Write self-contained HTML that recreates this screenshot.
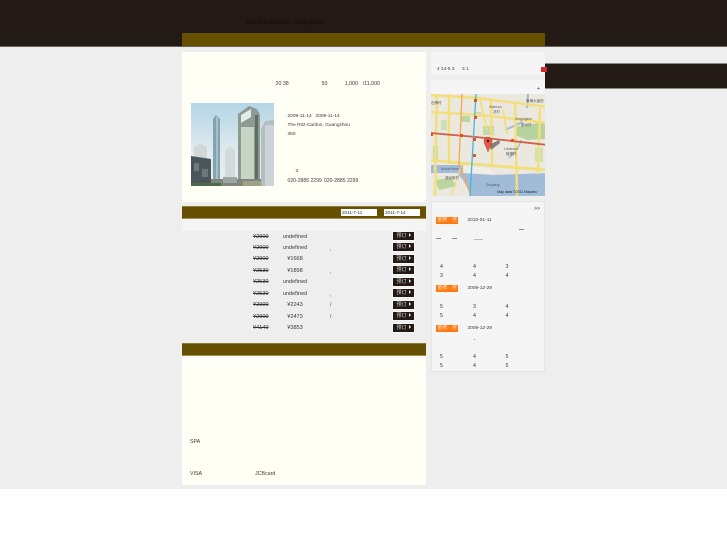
<!DOCTYPE html>
<html>
<head>
<meta charset="utf-8">
<style>
html,body{margin:0;padding:0;background:#fff;}
#p{position:relative;width:727px;height:545px;overflow:hidden;background:#fff;font-family:"Liberation Sans","Noto Sans CJK SC",sans-serif;font-size:5.3px;color:#3a3a3a;filter:blur(.25px);}
.b{position:absolute;}
.t{position:absolute;white-space:nowrap;line-height:8px;height:8px;margin-top:.6px;}
.n{font-size:4.8px;}
.r{font-size:5.6px;}
.c{transform:translateX(-50%);}
.s{text-decoration:line-through;color:#333;}
.btn{position:absolute;left:393px;width:21px;height:8px;background:#231a15;color:#ddd;font-size:5px;line-height:8px;text-align:center;outline:1px solid #f7f7f7;white-space:nowrap;}
.btn i{display:inline-block;width:0;height:0;border-left:2.5px solid #eee;border-top:2px solid transparent;border-bottom:2px solid transparent;margin-left:2px;}
.tag{position:absolute;left:436px;width:22px;height:7px;background:#ff7a0f;color:#ffe9d0;font-size:5px;line-height:7px;text-align:center;white-space:nowrap;}
.bar{position:absolute;background:#665000;border-top:1px solid #8d7b3a;border-bottom:1px solid #a08f55;box-sizing:border-box;}
.in{position:absolute;top:209px;width:36px;height:7px;background:#fff;color:#333;font-size:4.6px;line-height:7px;padding-left:1px;box-sizing:border-box;}
</style>
</head>
<body>
<div id="p">
<div class="b" style="left:0;top:0;width:727px;height:489px;background:#eeeeee;"></div>
<div class="b" style="left:0;top:0;width:727px;height:47px;background:#231a15;border-bottom:1px solid #6b655e;box-sizing:border-box;"></div>
<div class="b" style="left:182px;top:33px;width:363px;height:13px;background:#665000;"></div>
<div class="t" style="left:245px;top:18px;font-size:6.2px;color:#0f0b08;">The Ritz-Carlton, Guangzhou</div>

<div class="b" style="left:545px;top:63px;width:182px;height:26px;background:#231a15;border-top:1px solid #8a857f;border-bottom:1px solid #8a857f;box-sizing:border-box;"></div>

<div class="b" style="left:182px;top:52px;width:244px;height:150px;background:#fffff5;"></div>
<div class="t" style="left:275.500px;top:79px;">20 38</div>
<div class="t" style="left:321.500px;top:79px;">50</div>
<div class="t" style="left:344.700px;top:79px;">1,000</div>
<div class="t" style="left:362.700px;top:79px;">/11,000</div>

<svg class="b" style="left:191px;top:103px;" width="83" height="83" viewBox="0 0 83 83">
<defs><linearGradient id="sky" x1="0" y1="0" x2="0" y2="1"><stop offset="0" stop-color="#b4d5e6"/><stop offset=".6" stop-color="#e2ebee"/><stop offset="1" stop-color="#e8ecec"/></linearGradient></defs>
<rect width="83" height="83" fill="url(#sky)"/>
<polygon points="3,44 9,41 16,44 16,56 3,56" fill="#d2d6d6"/>
<polygon points="22,78 22,16 25,12 29,16 29,78" fill="#84a3b0"/>
<rect x="25" y="14" width="2" height="64" fill="#a8c0c9"/>
<polygon points="34,76 34,47 39,43 44,47 44,76" fill="#d4d9d9"/>
<polygon points="47,78 47,11 58,3 66,6 69,12 69,78" fill="#8b9a93"/>
<rect x="50" y="24" width="13" height="54" fill="#c6d6c4"/>
<rect x="64" y="12" width="3" height="66" fill="#616c67"/>
<polygon points="50,12 60,6 60,14 50,20" fill="#e3eaec"/>
<polygon points="70,26 74,18 83,17 83,83 70,83" fill="#b4bec2"/>
<rect x="74" y="22" width="9" height="61" fill="#ccd3d6"/>
<polygon points="0,53 20,56 20,83 0,83" fill="#4a565b"/>
<rect x="3" y="60" width="5" height="8" fill="#6c7a7f"/>
<rect x="11" y="66" width="6" height="8" fill="#6b777b"/>
<rect x="20" y="76" width="50" height="7" fill="#80867b"/>
<rect x="32" y="74" width="14" height="6" fill="#9aa5a5"/>
<rect x="52" y="78" width="18" height="5" fill="#a0a186"/>
<rect x="0" y="80" width="30" height="3" fill="#4d6b49"/>
</svg>

<div class="t n" style="left:287.5px;top:112px;">2009-11-14</div>
<div class="t n" style="left:315.500px;top:112px;">2009-11-14</div>
<div class="t n" style="left:287.5px;top:121px;">The Ritz-Carlton, Guangzhou</div>
<div class="t n" style="left:287.5px;top:130px;">350</div>
<div class="t n" style="left:295.500px;top:167px;">3</div>
<div class="t" style="left:287.5px;top:176.500px;font-size:5.1px;">020-2885 2299</div>
<div class="t" style="left:324px;top:176.500px;font-size:5.1px;">020-2885 2299</div>

<div class="bar" style="left:182px;top:206px;width:244px;height:13px;"></div>
<div class="in" style="left:341px;">2011-7-11</div>
<div class="in" style="left:384px;">2011-7-14</div>
<div class="b" style="left:182px;top:219px;width:244px;height:12px;background:#f5f5f5;"></div>

<div class="t r s" style="left:253px;top:232px;">¥2900</div><div class="t r c" style="left:295px;top:232px;">undefined</div><div class="btn" style="top:232px;">预订<i></i></div>
<div class="t r s" style="left:253px;top:243px;">¥2900</div><div class="t r c" style="left:295px;top:243px;">undefined</div><div class="t" style="left:330px;top:244px;">,</div><div class="btn" style="top:243px;">预订<i></i></div>
<div class="t r s" style="left:253px;top:254.500px;">¥2900</div><div class="t r c" style="left:295px;top:254.500px;">¥1668</div><div class="btn" style="top:255px;">预订<i></i></div>
<div class="t r s" style="left:253px;top:266px;">¥2530</div><div class="t r c" style="left:295px;top:266px;">¥1898</div><div class="t" style="left:330px;top:267px;">,</div><div class="btn" style="top:266px;">预订<i></i></div>
<div class="t r s" style="left:253px;top:277.500px;">¥2530</div><div class="t r c" style="left:295px;top:277.500px;">undefined</div><div class="btn" style="top:278px;">预订<i></i></div>
<div class="t r s" style="left:253px;top:289px;">¥2530</div><div class="t r c" style="left:295px;top:289px;">undefined</div><div class="t" style="left:330px;top:290px;">,</div><div class="btn" style="top:289px;">预订<i></i></div>
<div class="t r s" style="left:253px;top:300.500px;">¥2900</div><div class="t r c" style="left:295px;top:300.500px;">¥2243</div><div class="t" style="left:330px;top:300.500px;">/</div><div class="btn" style="top:301px;">预订<i></i></div>
<div class="t r s" style="left:253px;top:312px;">¥2900</div><div class="t r c" style="left:295px;top:312px;">¥2473</div><div class="t" style="left:330px;top:312px;">/</div><div class="btn" style="top:312px;">预订<i></i></div>
<div class="t r s" style="left:253px;top:323.500px;">¥4140</div><div class="t r c" style="left:295px;top:323.500px;">¥3853</div><div class="btn" style="top:324px;">预订<i></i></div>

<div class="bar" style="left:182px;top:343px;width:244px;height:13px;"></div>
<div class="b" style="left:182px;top:356px;width:244px;height:129px;background:#fffff5;"></div>
<div class="t" style="left:190px;top:437px;">SPA</div>
<div class="t" style="left:190px;top:469px;">VISA</div>
<div class="t" style="left:255px;top:469px;">JCBcard</div>

<div class="b" style="left:431px;top:52px;width:114px;height:23px;background:#f5f5f5;"></div>
<div class="t n" style="left:437px;top:65px;">4 14-5 3</div>
<div class="t n" style="left:462px;top:65px;">3 1</div>
<div class="b" style="left:541px;top:67px;width:6px;height:5px;background:#d8262a;"></div>

<div class="b" style="left:431px;top:80px;width:114px;height:116px;background:#f5f5f5;"></div>
<div class="t" style="left:537px;top:84px;">+</div>

<svg class="b" style="left:431px;top:94px;" width="114" height="102" viewBox="0 0 114 102">
<rect width="114" height="102" fill="#ebe8df"/>
<polygon points="84,33 114,28 114,45 96,46 84,41" fill="#b6d29d"/>
<rect x="30" y="22" width="9" height="6" fill="#bcd6a0"/>
<rect x="52" y="32" width="11" height="9" fill="#c4d9a8"/>
<rect x="2" y="52" width="5" height="14" fill="#c5dcaa"/>
<rect x="44" y="18" width="6" height="5" fill="#c8dcae"/>
<rect x="104" y="54" width="8" height="14" fill="#cfe0b5"/>
<rect x="10" y="26" width="6" height="10" fill="#cfe0b5"/>
<polygon points="-1,71 32,71 32,79 62,81 117,79 117,103 41,103 32,86 26,79 -1,79" fill="#a0bcd8"/>
<polygon points="33,72 58,74 62,80 33,79" fill="#efeee6"/>
<polygon points="4,86 20,84 26,92 8,96" fill="#bcd59f"/>
<path d="M97 0 L96 14 M74 36 L92 28" stroke="#a0bcd8" stroke-width="2" fill="none"/>
<path d="M90 46 C88 54 84 58 78 64" stroke="#a0bcd8" stroke-width="1.500" fill="none"/>
<g stroke="#f3df7a" fill="none" stroke-width="2.400">
<path d="M-1 1 L46 4 L117 13"/>
<path d="M-1 18 L50 21 L117 29"/>
<path d="M-1 66 L40 70 L117 76" stroke-width="2.800"/>
<path d="M6 0 L4 78"/>
<path d="M18 0 L18 70"/>
<path d="M60 6 L61 72"/>
<path d="M84 8 L86 102"/>
<path d="M109 14 L107 80"/>
<path d="M49 5 L56 36" stroke-width="1.800"/>
<path d="M72 15 L76 40" stroke-width="1.800"/>
<path d="M5 78 L4 102"/>
<path d="M31 70 L20 102" stroke-width="1.200"/>
</g>
<path d="M-1 39 L45 43 L117 51" stroke="#d0604e" stroke-width="1.800" fill="none"/>
<path d="M31 0 L28 69 L40 102" stroke="#f4a65a" stroke-width="1.300" fill="none"/>
<path d="M45 0 L39 102" stroke="#3fb8e0" stroke-width="1.300" fill="none"/>
<g fill="#e8501f">
<rect x="43" y="5" width="3" height="3"/><rect x="43" y="22" width="3" height="3"/>
<rect x="42" y="44" width="3" height="3"/><rect x="42" y="60" width="3" height="3"/>
<rect x="-1" y="39" width="3" height="3"/><rect x="29" y="40" width="3" height="3"/>
<rect x="80" y="45" width="3" height="3"/>
</g>
<polygon points="58,51 68,46 69,49 60,56" fill="#555" opacity=".7"/>
<path d="M57 58 C55 52 53 50 53 47 A4 4 0 1 1 61 47 C61 50 59 52 57 58Z" fill="#e8564a" stroke="#a63a30" stroke-width=".4"/>
<circle cx="57" cy="47" r="1.200" fill="#3a1512"/>
<g font-family="'Liberation Sans','Noto Sans CJK SC',sans-serif" fill="#555" font-size="3.500">
<text x="58" y="14">Xiancun</text><text x="62" y="19">冼村</text>
<text x="84" y="26">Xingingkun</text><text x="90" y="32">新洲村</text>
<text x="73" y="56">Liedecun</text><text x="75" y="61">猎德村</text>
<text x="10" y="76">Kuixin New</text><text x="14" y="85">澳洲新村</text>
<text x="55" y="92">Zhujiang</text>
<text x="66" y="99" fill="#222" font-size="3.600">Map data ©2011 Mapabc</text>
<text x="0" y="10">石牌村</text>
<text x="95" y="8">黄埔大道西</text>
</g>
</svg>

<div class="b" style="left:431px;top:201px;width:114px;height:171px;background:#f5f5f5;border:1px solid #e6e6e0;box-sizing:border-box;"></div>
<div class="t" style="left:534px;top:204px;">&gt;&gt;</div>
<div class="tag" style="top:217px;">金牌 · 河</div>
<div class="t n" style="left:467.500px;top:216.500px;">2010-01-11</div>
<div class="b" style="left:519px;top:229px;width:5px;height:1px;background:#888;"></div>
<div class="b" style="left:436px;top:238px;width:5px;height:1px;background:#888;"></div>
<div class="b" style="left:452px;top:238px;width:5px;height:1px;background:#888;"></div>
<div class="b" style="left:474px;top:239px;width:9px;height:1px;background:#bbb;"></div>
<div class="t" style="left:440px;top:262px;">4</div><div class="t" style="left:473px;top:262px;">4</div><div class="t" style="left:505.500px;top:262px;">3</div>
<div class="t" style="left:440px;top:271px;">3</div><div class="t" style="left:473px;top:271px;">4</div><div class="t" style="left:505.500px;top:271px;">4</div>
<div class="tag" style="top:285px;">金牌 · 河</div>
<div class="t n" style="left:467.500px;top:284.500px;">2009-12-29</div>
<div class="t" style="left:440px;top:302.500px;">5</div><div class="t" style="left:473px;top:302.500px;">3</div><div class="t" style="left:505.500px;top:302.500px;">4</div>
<div class="t" style="left:440px;top:311.500px;">5</div><div class="t" style="left:473px;top:311.500px;">4</div><div class="t" style="left:505.500px;top:311.500px;">4</div>
<div class="tag" style="top:325px;">金牌 · 河</div>
<div class="t n" style="left:467.500px;top:324.500px;">2009-12-29</div>
<div class="b" style="left:473.500px;top:339px;width:1px;height:1px;background:#888;"></div>
<div class="t" style="left:440px;top:352px;">5</div><div class="t" style="left:473px;top:352px;">4</div><div class="t" style="left:505.500px;top:352px;">5</div>
<div class="t" style="left:440px;top:361.500px;">5</div><div class="t" style="left:473px;top:361.500px;">4</div><div class="t" style="left:505.500px;top:361.500px;">5</div>
</div>
</body>
</html>
